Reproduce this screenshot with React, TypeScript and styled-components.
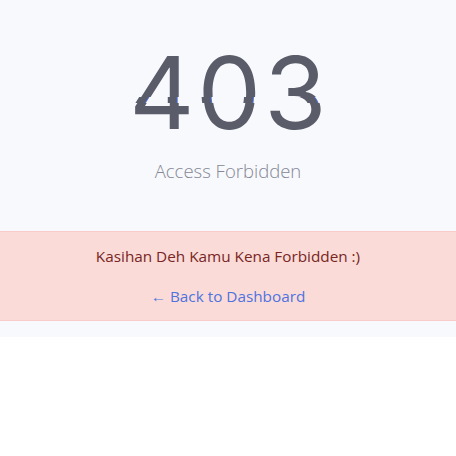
import React from 'react';
import styled, { createGlobalStyle } from 'styled-components';

const GlobalStyle = createGlobalStyle`
  html, body {
    margin: 0;
    padding: 0;
    background: #fff;
    font-family: 'Open Sans', 'Noto Sans', sans-serif;
  }
`;

const Page = styled.div`
  background: #f8f9fc;
  padding: 42px 0 16px;
  display: flex;
  flex-direction: column;
  align-items: center;
`;

// glitch slice frozen mid-animation: a thin band shifted left with a blue edge
const ErrorCode = styled.div`
  position: relative;
  color: #5a5c69;
  font-family: Inter, 'Open Sans', sans-serif;
  font-size: 101px;
  line-height: 1;
  font-weight: 400;
  letter-spacing: 3px;
  margin-right: -3px;

  &::before {
    content: attr(data-text);
    position: absolute;
    top: 0;
    left: -2px;
    color: #5a5c69;
    background: #f8f9fc;
    text-shadow: 1px 0 #4e73df;
    overflow: hidden;
    clip-path: inset(55px 0 40px 0);
  }
`;

const Lead = styled.p`
  margin: 15px 0 48px;
  color: #858796;
  font-size: 18.5px;
  font-weight: 300;
`;

const Alert = styled.div`
  align-self: stretch;
  background: #fadbd8;
  border-top: 1px solid #f8ccc8;
  border-bottom: 1px solid #f8ccc8;
  color: #78261f;
  padding: 14px 20px 13px;
  display: flex;
  flex-direction: column;
  align-items: center;
  gap: 19px;
  font-size: 15.3px;
  line-height: 21px;
`;

const Message = styled.p`
  margin: 0;
`;

const BackLink = styled.a`
  color: #4e73df;
  text-decoration: none;
  cursor: pointer;
`;

export default function App() {
  return (
    <>
      <GlobalStyle />
      <Page>
        <ErrorCode data-text="403">403</ErrorCode>
        <Lead>Access Forbidden</Lead>
        <Alert>
          <Message>Kasihan Deh Kamu Kena Forbidden :)</Message>
          <BackLink href="#">← Back to Dashboard</BackLink>
        </Alert>
      </Page>
    </>
  );
}
